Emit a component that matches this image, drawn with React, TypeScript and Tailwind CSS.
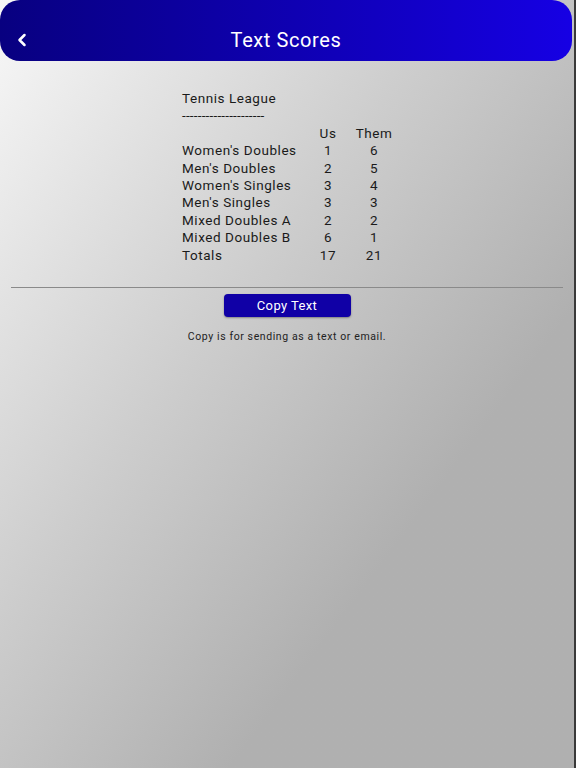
import { ChevronLeft } from 'lucide-react';

const rows: [string, string, string][] = [
  ["Women's Doubles", '1', '6'],
  ["Men's Doubles", '2', '5'],
  ["Women's Singles", '3', '4'],
  ["Men's Singles", '3', '3'],
  ['Mixed Doubles A', '2', '2'],
  ['Mixed Doubles B', '6', '1'],
  ['Totals', '17', '21'],
];

export default function App() {
  return (
    <div
      className="flex h-[768px] w-[576px] flex-col overflow-hidden border-r-2 border-[#3a3a3a] bg-gradient-to-br from-[#f8f8f8] via-[#cdcdcd] via-40% to-[#b0b0b0] to-70% text-[#1a1a1a]"
      style={{ fontFamily: 'Roboto, "Noto Sans", sans-serif' }}
    >
      <header className="relative flex h-[61px] w-[572px] shrink-0 items-center justify-center rounded-[20px] bg-gradient-to-r from-[#080080] to-[#1600e4] pt-[19px] text-white">
        <button className="absolute left-[12px] top-[30px] flex items-center" aria-label="Back">
          <ChevronLeft className="h-[20px] w-[20px]" strokeWidth={3} aria-hidden="true" />
        </button>
        <h1 className="text-[20px] tracking-[0.6px]">Text Scores</h1>
      </header>

      <section className="ml-[182px] mt-[29px] text-[13.5px] leading-[17.4px] tracking-[0.55px]">
        <p>Tennis League</p>
        <p className="tracking-[0.2px]">---------------------</p>
        <div className="grid grid-cols-[128px_36px_56px]">
          <span />
          <span className="text-center">Us</span>
          <span className="text-center">Them</span>
          {rows.map(([label, us, them]) => (
            <div key={label} className="contents">
              <span>{label}</span>
              <span className="text-center">{us}</span>
              <span className="text-center">{them}</span>
            </div>
          ))}
        </div>
      </section>

      <hr className="mx-[11px] mt-[23px] border-t border-[#8a8a8a]" />

      <div className="mt-[6px] flex flex-col items-center">
        <button className="h-[23px] w-[127px] rounded-[4px] bg-[#1000a6] text-[13px] tracking-[0.4px] text-white shadow-[0_1px_2px_rgba(0,0,0,0.35)]">
          Copy Text
        </button>
        <p className="mt-[12px] text-[10.5px] tracking-[0.6px] text-[#222]">
          Copy is for sending as a text or email.
        </p>
      </div>
    </div>
  );
}
